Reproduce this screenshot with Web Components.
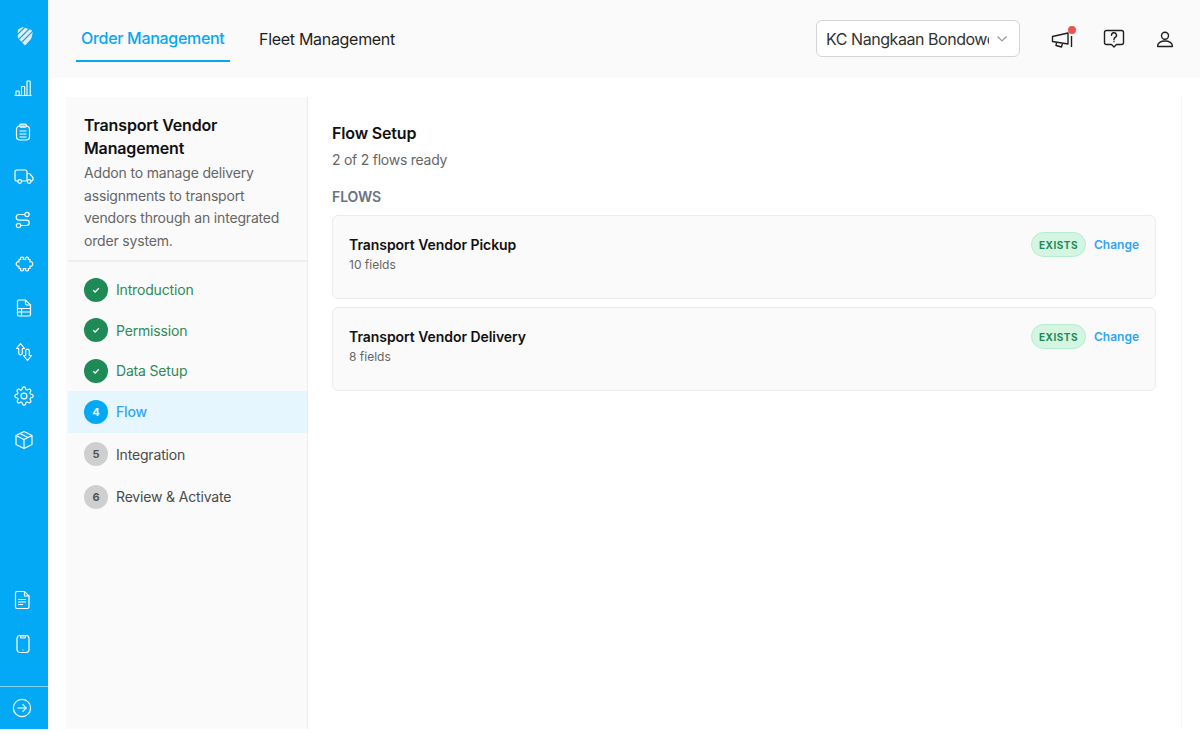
<!DOCTYPE html>
<html lang="en">
<head>
<meta charset="utf-8">
<title>Transport Vendor Management</title>
<style>
    html, body { margin: 0; padding: 0; background: #fff; font-family: Inter, "Liberation Sans", sans-serif; }
    body { height: 747px; overflow: hidden; }
</style>
</head>
<body>
<app-shell>
    <side-nav slot="nav"></side-nav>
    <top-bar slot="top"></top-bar>
    <setup-steps slot="steps"
        heading="Transport Vendor Management"
        text="Addon to manage delivery assignments to transport vendors through an integrated order system.">
        <step-item state="done" label="Introduction"></step-item>
        <step-item state="done" label="Permission"></step-item>
        <step-item state="done" label="Data Setup"></step-item>
        <step-item state="active" num="4" label="Flow"></step-item>
        <step-item num="5" label="Integration"></step-item>
        <step-item num="6" label="Review &amp; Activate"></step-item>
    </setup-steps>
    <flow-setup slot="main">
        <flow-card name="Transport Vendor Pickup" fields="10 fields"></flow-card>
        <flow-card name="Transport Vendor Delivery" fields="8 fields"></flow-card>
    </flow-setup>
</app-shell>

<script>
const NAV_ICONS = {
    logo: `<svg width="20" height="20" viewBox="0 0 20 20"><path d="M8 1 16.400 4Q18 4.800 17.600 7L16.600 11.600Q16.400 12.600 15.600 13.400L10.800 18.800Q10 19.600 9.200 18.800L3.600 12.800Q2.800 12 2.800 10.800V4.800Q2.800 3.400 4.200 2.800z" fill="#e6ebee"/><path d="M1 10 10 1M1 16 17 0M5 18 20 3" stroke="#03a9f4" stroke-width="1.100"/></svg>`,
    chart: `<svg width="20" height="20" viewBox="0 0 20 20" fill="none" stroke="#fff" stroke-width="1.100" style="transform:translateX(-1px)"><path d="M1.500 17.500h17"/><rect x="3" y="13" width="3.200" height="4.500" rx=".5"/><rect x="8.500" y="8.500" width="3.200" height="9" rx=".5"/><rect x="14" y="3" width="3.200" height="14.500" rx=".5"/></svg>`,
    orders: `<svg width="20" height="20" viewBox="0 0 20 20" fill="none" stroke="#fff" stroke-width="1.200" style="transform:translateX(-1px)"><rect x="3.500" y="4" width="13" height="14" rx="3.500"/><rect x="6.500" y="2.200" width="7" height="3" rx="1.500"/><path d="M6.500 9h7M6.500 12h7M6.500 15h7"/></svg>`,
    truck: `<svg width="20" height="20" viewBox="0 0 20 20" fill="none" stroke="#fff" stroke-width="1.200"><path d="M3.800 15H2.800A1.800 1.800 0 0 1 1 13.200V5.800A1.800 1.800 0 0 1 2.800 4h8.400A1.800 1.800 0 0 1 13 5.800V15H7.500"/><path d="M13 7.500h2.600l3.400 4v2a1.500 1.500 0 0 1-1.500 1.500H17M13 15h.5"/><circle cx="5.700" cy="15.500" r="1.800"/><circle cx="15.200" cy="15.500" r="1.800"/></svg>`,
    flow: `<svg width="20" height="20" viewBox="0 0 20 20" fill="none" stroke="#fff" stroke-width="1.200" style="transform:translateX(-1px)"><circle cx="14" cy="4.500" r="2.200"/><circle cx="5.500" cy="15.500" r="2.200"/><path d="M11.800 4.500H6a2.800 2.800 0 0 0 0 5.600h7.500a2.700 2.700 0 0 1 0 5.400H7.700"/></svg>`,
    puzzle: `<svg width="20" height="20" viewBox="0 0 20 20" fill="none" stroke="#fff" stroke-width="1.200" stroke-linejoin="round"><path d="M5 5.500H6.800C6 4.600 6.500 3 8 3S10 4.600 9.200 5.500H11.800C11 4.600 11.500 3 13 3S15 4.600 14.200 5.500H16V8C17 7.300 18.800 7.800 18.800 10S17 12.700 16 12V14.500H14.200C15 15.400 14.500 17 13 17S11 15.400 11.800 14.500H9.200C10 15.400 9.500 17 8 17S6 15.400 6.800 14.500H5V12C4 12.700 2.200 12.200 2.200 10S4 7.300 5 8z"/></svg>`,
    sheet: `<svg width="20" height="20" viewBox="0 0 20 20" fill="none" stroke="#fff" stroke-width="1.200"><path d="M5 2h6.500L16.500 7v9.500A1.500 1.500 0 0 1 15 18H5a1.500 1.500 0 0 1-1.500-1.500v-13A1.500 1.500 0 0 1 5 2z"/><path d="M11.500 2v3.500A1.500 1.500 0 0 0 13 7h3.500M3.500 10.500h13M3.500 14h13M7.500 10.500V18"/></svg>`,
    swap: `<svg width="20" height="20" viewBox="0 0 20 20" fill="none" stroke="#fff" stroke-width="1.200" stroke-linejoin="round"><path d="M6.500 1.500 2.500 6.500h2.200v4.500a1.800 1.800 0 0 0 3.600 0V6.500h2.200z"/><path d="M13.500 18.500 9.500 13.500h2.200V9a1.800 1.800 0 0 1 3.600 0v4.500h2.200z"/></svg>`,
    gear: `<svg width="20" height="20" viewBox="0 0 24 24" fill="none" stroke="#fff" stroke-width="1.400" stroke-linecap="round" stroke-linejoin="round"><circle cx="12" cy="12" r="3.500"/><path d="M19.400 15a1.650 1.650 0 0 0 .33 1.820l.06.06a2 2 0 1 1-2.830 2.830l-.06-.06a1.650 1.650 0 0 0-2.800 1.170V21a2 2 0 1 1-4 0v-.09A1.650 1.650 0 0 0 7.300 19.740l-.06.06a2 2 0 1 1-2.830-2.830l.06-.06a1.650 1.650 0 0 0-1.170-2.800H3a2 2 0 1 1 0-4h.09A1.650 1.650 0 0 0 4.260 7.300l-.06-.06a2 2 0 1 1 2.830-2.830l.06.06a1.650 1.650 0 0 0 2.800-1.170V3a2 2 0 1 1 4 0v.09a1.650 1.650 0 0 0 2.800 1.170l.06-.06a2 2 0 1 1 2.830 2.830l-.06.06a1.650 1.650 0 0 0 1.170 2.800H21a2 2 0 1 1 0 4h-.09a1.650 1.650 0 0 0-1.510 1z"/></svg>`,
    box: `<svg width="20" height="20" viewBox="0 0 20 20" fill="none" stroke="#fff" stroke-width="1.200" stroke-linejoin="round"><path d="M10 1.500 18 5.500v9L10 18.500 2 14.500v-9z"/><path d="M2 5.500 10 9.500 18 5.500M10 9.500v9M6 3.500 14 7.500"/></svg>`,
    doc: `<svg width="20" height="20" viewBox="0 0 20 20" fill="none" stroke="#fff" stroke-width="1.200" stroke-linecap="round" style="transform:translateX(-2px)"><path d="M5 1.500h7.500L17 6v11a1.500 1.500 0 0 1-1.500 1.500H5A1.500 1.500 0 0 1 3.500 17V3A1.500 1.500 0 0 1 5 1.500z"/><path d="M12.500 1.500V6H17M6.500 9.500h7M6.500 12h7M6.500 14.500h4"/></svg>`,
    phone: `<svg width="20" height="20" viewBox="0 0 20 20" fill="none" stroke="#fff" stroke-width="1.200" style="transform:translateX(-1px)"><rect x="4" y="1.500" width="12" height="17" rx="3"/><path d="M7.500 2h5v1a1 1 0 0 1-1 1h-3a1 1 0 0 1-1-1z"/><path d="M9.500 16h1"/></svg>`,
    expand: `<svg width="20" height="20" viewBox="0 0 20 20" fill="none" stroke="#fff" stroke-width="1.200"><circle cx="10" cy="10" r="8.600"/><path d="M5.500 10h8.500M10.500 6.200 14.300 10l-3.800 3.800" stroke="#bfe8ff" stroke-width="1.400"/></svg>`
};

class AppShell extends HTMLElement {
    constructor() {
        super();
        this.attachShadow({ mode: "open" });
        this.shadowRoot.innerHTML = `
            <style>
                :host { display: flex; height: 729px; background: #fff; }
                .right { flex: 1; display: flex; flex-direction: column; min-width: 0; }
                .body { flex: 1; display: flex; min-height: 0; padding: 19px 18px 0 18px; }
                ::slotted([slot="steps"]) { flex: none; }
                ::slotted([slot="main"]) { flex: 1; min-width: 0; }
            </style>
            <slot name="nav"></slot>
            <div class="right">
                <slot name="top"></slot>
                <div class="body">
                    <slot name="steps"></slot>
                    <slot name="main"></slot>
                </div>
            </div>
        `;
    }
}

class SideNav extends HTMLElement {
    constructor() {
        super();
        this.attachShadow({ mode: "open" });
        const item = (name) => `<span class="item">${NAV_ICONS[name]}</span>`;
        this.shadowRoot.innerHTML = `
            <style>
                :host { display: flex; flex-direction: column; flex: none; width: 48px; background: #03a9f4; }
                .item { display: flex; align-items: center; justify-content: center; height: 44px; }
                .logo { height: 44px; margin: 14px 0 8px; }
                .logo svg { transform: translateX(1px); }
                .top { flex: 1; }
                .foot { border-top: 1px solid #7fd3f9; height: 42px; display: flex; align-items: center; justify-content: center; margin-top: 20px; }
                .foot svg { transform: translateX(-2px); }
            </style>
            <div class="top">
                <span class="item logo">${NAV_ICONS.logo}</span>
                ${["chart", "orders", "truck", "flow", "puzzle", "sheet", "swap", "gear", "box"].map(item).join("")}
            </div>
            ${item("doc")}
            ${item("phone")}
            <div class="foot">${NAV_ICONS.expand}</div>
        `;
    }
}

class TopBar extends HTMLElement {
    constructor() {
        super();
        this.attachShadow({ mode: "open" });
        this.shadowRoot.innerHTML = `
            <style>
                :host { display: flex; align-items: stretch; flex: none; height: 78px; background: #fafafa; padding: 0 23px 0 28px; }
                .tabs { display: flex; gap: 24px; flex: 1; }
                .tab { box-sizing: border-box; display: flex; align-items: center; padding: 15px 5px 0; height: 62px; font-size: 16px; color: #1f1f1f; letter-spacing: -.3px; }
                .tab.on { color: #03a9f4; font-weight: 500; border-bottom: 2px solid #03a9f4; width: 154px; }
                .select { align-self: flex-start; margin-top: 20px; box-sizing: border-box; width: 204px; height: 37px; display: flex; align-items: center; padding: 0 11px 0 9px; background: #fff; border: 1px solid #d4d4d4; border-radius: 6px; font-size: 16px; letter-spacing: -.45px; color: #333; }
                .select span { flex: 1; overflow: hidden; white-space: nowrap; }
                .select svg { margin-left: 7px; flex: none; }
                .actions { display: flex; align-items: center; margin: -1px 0 0 0; height: 78px; }
                .act { position: relative; display: flex; width: 24px; height: 24px; margin-left: 28px; align-items: center; justify-content: center; }
                .act:first-child { margin-left: 30px; }
                .act:last-child { margin-left: 27px; }
                .dot { position: absolute; top: 0; right: -2px; width: 8px; height: 8px; border-radius: 50%; background: #ef5350; }
            </style>
            <div class="tabs">
                <div class="tab on">Order Management</div>
                <div class="tab">Fleet Management</div>
            </div>
            <div class="select">
                <span>KC Nangkaan Bondowoso</span>
                <svg width="12" height="8" viewBox="0 0 12 8" fill="none" stroke="#999" stroke-width="1.200"><path d="M1.500 1.500 6 6l4.500-4.500"/></svg>
            </div>
            <div class="actions">
                <div class="act">
                    <svg width="24" height="24" viewBox="0 0 24 24" fill="none" stroke="#1f1f1f" stroke-width="1.400" stroke-linejoin="round"><path d="M2.500 10.500 18 7v11L2.500 15.500z"/><path d="M6.500 16.500 6 19.500l5.500 1.500.8-3.200"/><path d="M21.500 10v11"/></svg>
                    <span class="dot"></span>
                </div>
                <div class="act">
                    <svg width="24" height="24" viewBox="0 0 24 24" fill="none" stroke="#1f1f1f" stroke-width="1.400" stroke-linejoin="round"><path d="M4.500 4.500h15a2 2 0 0 1 2 2v10a2 2 0 0 1-2 2h-5l-2.500 2.500L9.500 18.500h-5a2 2 0 0 1-2-2v-10a2 2 0 0 1 2-2z"/><path d="M9.500 9.200a2.500 2.500 0 1 1 3.600 2.300c-.8.400-1.100.9-1.100 1.700v.5" stroke-linecap="round"/><path d="M12 15.300v1"/></svg>
                </div>
                <div class="act">
                    <svg width="24" height="24" viewBox="0 0 24 24" fill="none" stroke="#1f1f1f" stroke-width="1.400"><circle cx="12" cy="9.700" r="3.500"/><path d="M4.700 20.500v-1c0-2.500 3-4.500 7.300-4.500s7.300 2 7.300 4.500v1z" stroke-linejoin="round"/></svg>
                </div>
            </div>
        `;
    }
}

class SetupSteps extends HTMLElement {
    constructor() {
        super();
        this.attachShadow({ mode: "open" });
        this.shadowRoot.innerHTML = `
            <style>
                :host { display: block; box-sizing: border-box; width: 242px; background: #fafafa; border-right: 1px solid #ececec; padding-left: 2px; }
                .head { padding: 17px 16px 7.600px 16px; border-bottom: 2px solid #eeeeee; }
                h2 { margin: 0 0 2.400px; font-size: 16px; line-height: 23px; font-weight: 600; color: #111; letter-spacing: -.15px; }
                p { margin: 0; font-size: 14px; line-height: 22.500px; color: #666; letter-spacing: -.17px; }
                .list { display: flex; flex-direction: column; padding-top: 7.500px; }
            </style>
            <div class="head">
                <h2></h2>
                <p></p>
            </div>
            <div class="list"><slot></slot></div>
        `;
        this.shadowRoot.querySelector("h2").textContent = this.getAttribute("heading");
        this.shadowRoot.querySelector("p").textContent = this.getAttribute("text");
    }
}

class StepItem extends HTMLElement {
    constructor() {
        super();
        this.attachShadow({ mode: "open" });
        this.shadowRoot.innerHTML = `
            <style>
                :host { display: flex; align-items: center; gap: 8px; height: 40.500px; padding: 0 16px; font-size: 14px; letter-spacing: -.17px; color: #4a4a4a; }
                :host([state="active"]) { background: #e6f6ff; height: 42px; color: #2ea6f5; font-weight: 500; }
                :host([state="done"]) { color: #2e8b57; }
                :host(:not([state])) { height: 42.500px; }
                .dot { flex: none; width: 24px; height: 24px; border-radius: 50%; background: #cfcfcf; color: #555; display: flex; align-items: center; justify-content: center; font-size: 11px; font-weight: 700; letter-spacing: 0; }
                :host([state="active"]) .dot { background: #03a9f4; color: #fff; }
                :host([state="done"]) .dot { background: #1e8a56; color: #fff; }
            </style>
            <span class="dot"></span>
            <span class="label"></span>
        `;
        const dot = this.shadowRoot.querySelector(".dot");
        if (this.getAttribute("state") == "done") {
            dot.innerHTML = `<svg width="8" height="8" viewBox="0 0 8 8" fill="none" stroke="#fff" stroke-width="1.300"><path d="M1.200 4.200 3.200 6 6.800 2.200"/></svg>`;
        } else {
            dot.textContent = this.getAttribute("num");
        }
        this.shadowRoot.querySelector(".label").textContent = this.getAttribute("label");
    }
}

class FlowSetup extends HTMLElement {
    constructor() {
        super();
        this.attachShadow({ mode: "open" });
        this.shadowRoot.innerHTML = `
            <style>
                :host { display: block; box-sizing: border-box; background: #fff; border-right: 1px solid #f5f5f5; padding: 25px 25px 0 24px; }
                h3 { margin: 0; font-size: 16px; line-height: 22px; font-weight: 600; color: #111; letter-spacing: -.15px; }
                .sub { margin: 5px 0 0; font-size: 14px; line-height: 22px; letter-spacing: -.25px; color: #666; }
                .label { margin: 16px 0 8px; font-size: 14px; line-height: 20px; font-weight: 600; letter-spacing: -.1px; color: #6b7280; }
                .cards { display: flex; flex-direction: column; gap: 8px; }
            </style>
            <h3>Flow Setup</h3>
            <div class="sub">2 of 2 flows ready</div>
            <div class="label">FLOWS</div>
            <div class="cards"><slot></slot></div>
        `;
    }
}

class FlowCard extends HTMLElement {
    constructor() {
        super();
        this.attachShadow({ mode: "open" });
        this.shadowRoot.innerHTML = `
            <style>
                :host { display: flex; align-items: flex-start; box-sizing: border-box; height: 84px; padding: 16px 16px 0; background: #fafafa; border: 1px solid #ececec; border-radius: 6px; }
                .info { flex: 1; padding-top: 3px; }
                .name { font-size: 14px; line-height: 20px; font-weight: 600; letter-spacing: -.05px; color: #111; }
                .fields { font-size: 12px; line-height: 20px; color: #666; }
                .badge { box-sizing: border-box; height: 25px; width: 55px; display: flex; align-items: center; justify-content: center; background: #d5f5e3; border: 1px solid #b5ecd0; border-radius: 13px; font-size: 10px; font-weight: 700; letter-spacing: .5px; color: #1e8a56; }
                .change { margin-left: 8px; font-size: 12px; line-height: 25px; font-weight: 600; color: #2ea6f5; }
            </style>
            <div class="info">
                <div class="name"></div>
                <div class="fields"></div>
            </div>
            <span class="badge">EXISTS</span>
            <span class="change">Change</span>
        `;
        this.shadowRoot.querySelector(".name").textContent = this.getAttribute("name");
        this.shadowRoot.querySelector(".fields").textContent = this.getAttribute("fields");
    }
}

customElements.define("app-shell", AppShell);
customElements.define("side-nav", SideNav);
customElements.define("top-bar", TopBar);
customElements.define("setup-steps", SetupSteps);
customElements.define("step-item", StepItem);
customElements.define("flow-setup", FlowSetup);
customElements.define("flow-card", FlowCard);
</script>
</body>
</html>
